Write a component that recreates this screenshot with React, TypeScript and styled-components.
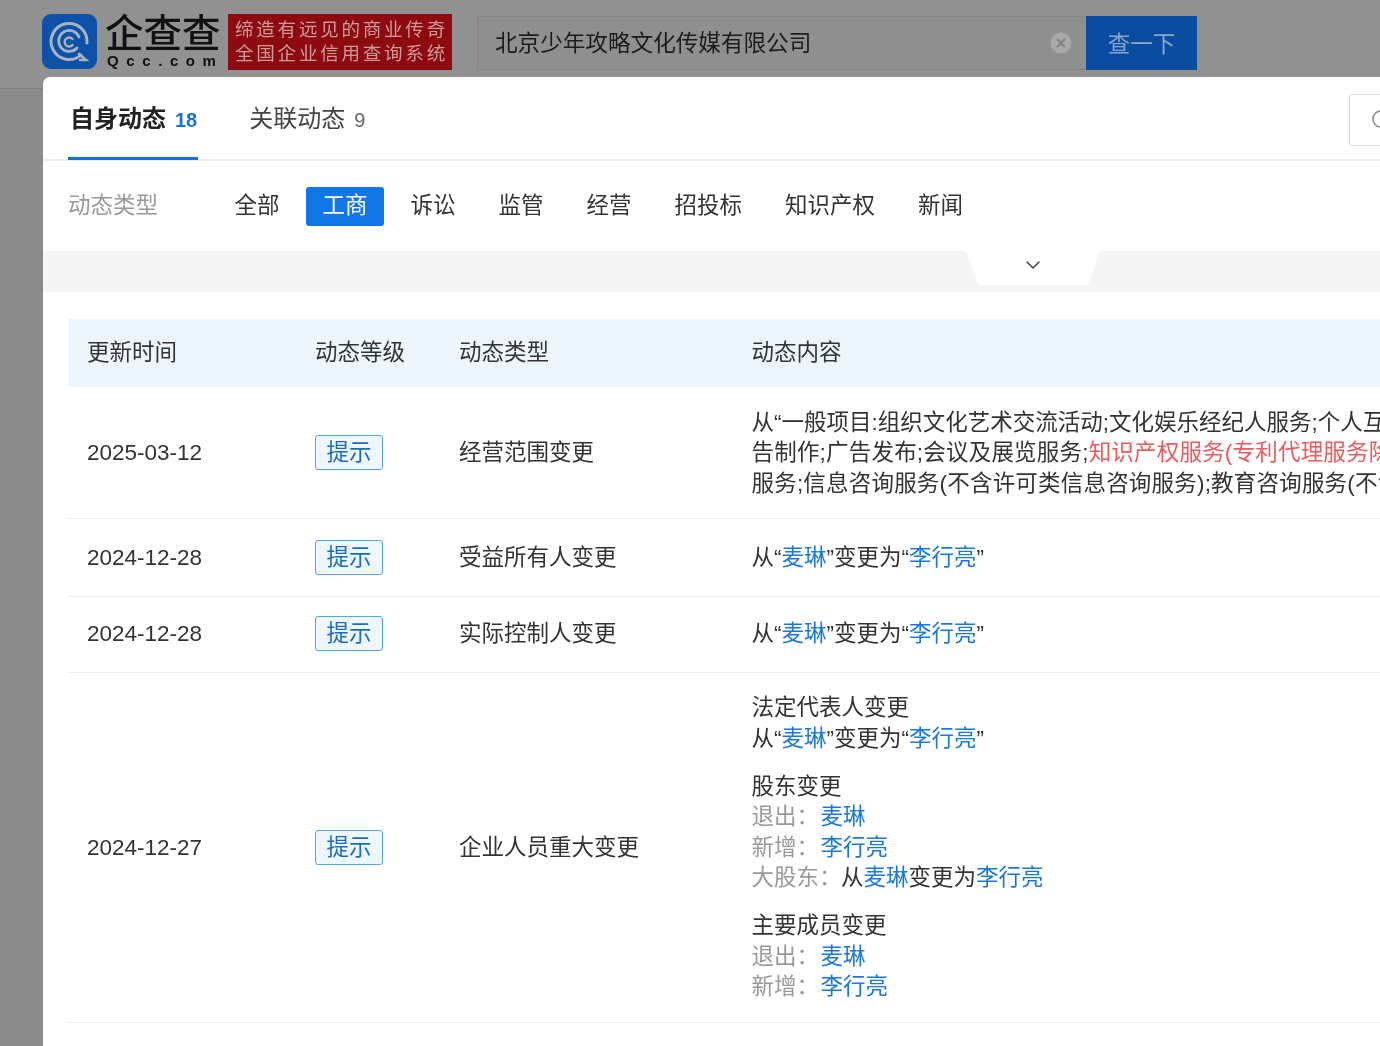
import styled, { createGlobalStyle } from "styled-components";
import { ChevronDown, Search } from "lucide-react";

const FONT = `"Liberation Sans", "Noto Sans CJK SC", sans-serif`;

const GlobalStyle = createGlobalStyle`
  html, body {
    margin: 0;
    height: 100%;
    overflow: hidden;
    background: #8b8b8b;
    font-family: ${FONT};
  }
  * { box-sizing: border-box; }
`;

const Page = styled.div`
  position: relative;
  width: 1380px;
  height: 1046px;
  overflow: hidden;
  filter: blur(0.35px);
`;

const TopBar = styled.header`
  display: flex;
  align-items: flex-start;
  height: 89px;
  padding: 14px 0 0 42px;
  background: #919191;
  border-bottom: 1px solid #808080;
`;

const LogoIcon = styled.svg`
  width: 55px;
  height: 55px;
  flex: none;
`;

const LogoText = styled.div`
  display: flex;
  flex-direction: column;
  align-items: flex-start;
  width: 120px;
  margin-left: 8px;
  color: #111;
`;

const LogoName = styled.div`
  font-size: 38.5px;
  font-weight: 500;
  line-height: 40px;
  white-space: nowrap;
`;

const LogoDomain = styled.div`
  margin: 0 0 0 2px;
  font-size: 15px;
  font-weight: 700;
  line-height: 14px;
  letter-spacing: 7.6px;
  white-space: nowrap;
`;

const Slogan = styled.div`
  flex: none;
  width: 224px;
  height: 56px;
  margin: 0 0 0 3px;
  padding: 4px 0 0 7px;
  background: #8c0a10;
  color: #cd9a9b;
  font-size: 18.6px;
  line-height: 24px;
  letter-spacing: 2.7px;
  white-space: nowrap;
`;

const SearchBox = styled.div`
  display: flex;
  align-items: center;
  justify-content: space-between;
  width: 609px;
  height: 54px;
  margin: 2px 0 0 25px;
  padding: 0 14px 3px 17px;
  border: 1px solid #858585;
  border-right: none;
  background: #8f8f8f;
  color: #1c1c1c;
  font-size: 22.6px;
`;

const ClearIcon = styled.svg`
  width: 22px;
  height: 22px;
  flex: none;
  margin-top: 3px;
`;

const SearchButton = styled.div`
  display: flex;
  align-items: center;
  justify-content: center;
  width: 111px;
  height: 54px;
  margin-top: 2px;
  padding-bottom: 3px;
  background: #0a4ca0;
  color: #8aa6cf;
  font-size: 22.5px;
`;

const Modal = styled.section`
  position: absolute;
  top: 77px;
  left: 43px;
  width: 1511px;
  height: 1000px;
  background: #fff;
  border-radius: 7px 7px 0 0;
  color: #333;
  font-size: 22.5px;
`;

const TabBar = styled.nav`
  display: flex;
  align-items: flex-start;
  height: 84px;
  padding: 0 25px;
  border-bottom: 2px solid #e9edf1;
`;

const Tab = styled.div<{ $active?: boolean }>`
  display: flex;
  align-items: baseline;
  gap: 9px;
  height: 83px;
  margin-right: 49px;
  padding: 24px 1px 0 2px;
  line-height: 36px;
  font-size: 24px;
  font-weight: ${({ $active }) => ($active ? 700 : 400)};
  color: ${({ $active }) => ($active ? "#222" : "#444")};
  border-bottom: 3px solid ${({ $active }) => ($active ? "#1672d8" : "transparent")};
`;

const TabCount = styled.span<{ $active?: boolean }>`
  font-size: 20px;
  font-weight: ${({ $active }) => ($active ? 700 : 400)};
  color: ${({ $active }) => ($active ? "#1a73d8" : "#666")};
`;

const TabAction = styled.div`
  display: flex;
  align-items: center;
  width: 180px;
  height: 52px;
  margin: 17px 0 0 auto;
  padding-left: 20px;
  border: 1px solid #d9dde2;
  border-radius: 3px;
  color: #888;
`;

const FilterRow = styled.div`
  display: flex;
  align-items: center;
  height: 90px;
  padding: 0 25px;
`;

const FilterLabel = styled.div`
  width: 150px;
  height: 39px;
  line-height: 37px;
  color: #999;
`;

const FilterList = styled.div`
  display: flex;
  gap: 10px;
`;

const FilterItem = styled.div<{ $active?: boolean }>`
  height: 39px;
  padding: 0 16.5px;
  border-radius: 3px;
  line-height: 37px;
  background: ${({ $active }) => ($active ? "#1176e6" : "transparent")};
  color: ${({ $active }) => ($active ? "#fff" : "#333")};
`;

const Strip = styled.div`
  position: relative;
  height: 41px;
  background: #f5f5f6;
`;

const Expander = styled.div`
  position: absolute;
  top: 0;
  left: 923px;
  display: flex;
  justify-content: center;
  width: 134px;
  height: 34px;
  padding-top: 2px;
  background: #fff;
  color: #444;
  clip-path: polygon(0 0, 100% 0, 91% 100%, 9% 100%);
`;

const Table = styled.div`
  margin: 27px 0 0 25px;
`;

const Row = styled.div<{ $head?: boolean; $height: number; $inset?: number }>`
  display: grid;
  grid-template-columns: 228px 144px 292.5px 1fr;
  align-items: center;
  height: ${({ $height }) => $height}px;
  padding: ${({ $inset }) => $inset ?? 2}px 0 0 19px;
  line-height: 30.5px;
  white-space: nowrap;
  background: ${({ $head }) => ($head ? "#eef6fd" : "transparent")};
  border-bottom: ${({ $head }) => ($head ? "none" : "1px solid #eceff2")};
`;

const Level = styled.span`
  display: block;
  width: 68px;
  height: 35px;
  margin-top: -2px;
  border: 1px solid #57a5e2;
  border-radius: 3px;
  background: #eff7fe;
  color: #1a6cc0;
  line-height: 33px;
  text-align: center;
`;

const Line = styled.div<{ $tracking?: number }>`
  letter-spacing: ${({ $tracking }) => $tracking ?? 0}px;
`;

const Group = styled.div`
  & + & {
    margin-top: 17.5px;
  }
`;

const Field = styled.span<{ $gap?: number }>`
  color: #999;
  margin-right: ${({ $gap }) => $gap ?? 1.5}px;
`;

const Link = styled.span`
  color: #1a78dc;
`;

const Danger = styled.span`
  color: #ee5a5a;
`;

const Change = () => (
  <>
    从“<Link>麦琳</Link>”变更为“<Link>李行亮</Link>”
  </>
);

export default function App() {
  return (
    <Page>
      <GlobalStyle />
      <TopBar>
        <LogoIcon viewBox="0 0 55 55">
          <rect width="55" height="55" rx="9" fill="#0d51a8" />
          <g fill="none" stroke="#aab4c0" strokeLinecap="round">
            <path d="M39 41 A18 18 0 1 1 45 29" strokeWidth="3" />
            <path d="M35 34 A10.5 10.5 0 1 1 37 23" strokeWidth="2.8" />
            <path d="M30.5 25 A4.5 4.5 0 1 0 30.5 31" strokeWidth="2.4" />
            <path d="M37 40 L44 46 L38 46" strokeWidth="2.6" />
          </g>
        </LogoIcon>
        <LogoText>
          <LogoName>企查查</LogoName>
          <LogoDomain>Qcc.com</LogoDomain>
        </LogoText>
        <Slogan>
          缔造有远见的商业传奇
          <br />
          全国企业信用查询系统
        </Slogan>
        <SearchBox>
          北京少年攻略文化传媒有限公司
          <ClearIcon viewBox="0 0 22 22">
            <circle cx="11" cy="11" r="10.5" fill="#a9a9a9" />
            <path d="M7 7 L15 15 M15 7 L7 15" stroke="#808080" strokeWidth="1.8" />
          </ClearIcon>
        </SearchBox>
        <SearchButton>查一下</SearchButton>
      </TopBar>

      <Modal>
        <TabBar>
          <Tab $active>
            自身动态<TabCount $active>18</TabCount>
          </Tab>
          <Tab>
            关联动态<TabCount>9</TabCount>
          </Tab>
          <TabAction>
            <Search size={24} strokeWidth={1.5} />
          </TabAction>
        </TabBar>

        <FilterRow>
          <FilterLabel>动态类型</FilterLabel>
          <FilterList>
            <FilterItem>全部</FilterItem>
            <FilterItem $active>工商</FilterItem>
            <FilterItem>诉讼</FilterItem>
            <FilterItem>监管</FilterItem>
            <FilterItem>经营</FilterItem>
            <FilterItem>招投标</FilterItem>
            <FilterItem>知识产权</FilterItem>
            <FilterItem>新闻</FilterItem>
          </FilterList>
        </FilterRow>

        <Strip>
          <Expander>
            <ChevronDown size={24} strokeWidth={1.5} />
          </Expander>
        </Strip>

        <Table>
          <Row $head $height={68} $inset={0}>
            <div>更新时间</div>
            <div>动态等级</div>
            <div>动态类型</div>
            <div>动态内容</div>
          </Row>
          <Row $height={132}>
            <div>2025-03-12</div>
            <div>
              <Level>提示</Level>
            </div>
            <div>经营范围变更</div>
            <div>
              <Line>从“一般项目:组织文化艺术交流活动;文化娱乐经纪人服务;个人互联网直播服务;广</Line>
              <Line $tracking={0.2}>
                告制作;广告发布;会议及展览服务;<Danger>知识产权服务(专利代理服务除外);</Danger>咨询策划
              </Line>
              <Line $tracking={0.2}>服务;信息咨询服务(不含许可类信息咨询服务);教育咨询服务(不含涉许可审批)</Line>
            </div>
          </Row>
          <Row $height={78}>
            <div>2024-12-28</div>
            <div>
              <Level>提示</Level>
            </div>
            <div>受益所有人变更</div>
            <div>
              <Change />
            </div>
          </Row>
          <Row $height={76} $inset={0}>
            <div>2024-12-28</div>
            <div>
              <Level>提示</Level>
            </div>
            <div>实际控制人变更</div>
            <div>
              <Change />
            </div>
          </Row>
          <Row $height={350} $inset={1}>
            <div>2024-12-27</div>
            <div>
              <Level>提示</Level>
            </div>
            <div>企业人员重大变更</div>
            <div>
              <Group>
                法定代表人变更
                <br />
                <Change />
              </Group>
              <Group>
                股东变更
                <br />
                <Field>退出：</Field>
                <Link>麦琳</Link>
                <br />
                <Field>新增：</Field>
                <Link>李行亮</Link>
                <br />
                <Field $gap={-0.5}>大股东：</Field>从<Link>麦琳</Link>变更为<Link>李行亮</Link>
              </Group>
              <Group>
                主要成员变更
                <br />
                <Field>退出：</Field>
                <Link>麦琳</Link>
                <br />
                <Field>新增：</Field>
                <Link>李行亮</Link>
              </Group>
            </div>
          </Row>
        </Table>
      </Modal>
    </Page>
  );
}
